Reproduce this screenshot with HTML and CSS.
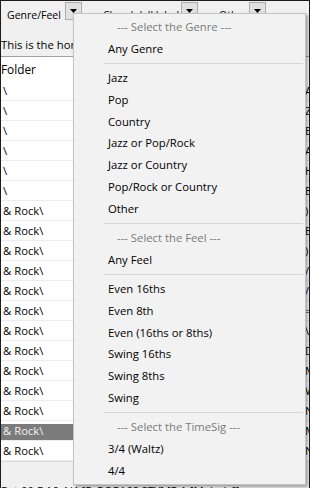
FILE: index.html
```html
<!DOCTYPE html>
<html lang="en">
<head>
  <meta charset="UTF-8" />
  <title>Style Picker</title>
  <link rel="stylesheet" href="styles.css">
</head>
<body>

  <div class="window">
    <div class="toolbar">
      <div class="field field-genre">
        <span class="field-label">Genre/Feel</span>
        <button class="drop"><svg width="7" height="4" viewBox="0 0 7 4"><path d="M0 0h7L3.5 4z" fill="#000"/></svg></button>
      </div>
      <div class="field field-chord">
        <span class="field-label">Chords/all label</span>
        <button class="drop"><svg width="7" height="4" viewBox="0 0 7 4"><path d="M0 0h7L3.5 4z" fill="#000"/></svg></button>
      </div>
      <div class="field field-other">
        <span class="field-label">Other</span>
        <button class="drop"><svg width="7" height="4" viewBox="0 0 7 4"><path d="M0 0h7L3.5 4z" fill="#000"/></svg></button>
      </div>
    </div>

    <div class="hint">This is the home folder of the styles</div>

    <div class="list">
      <div class="list-head">Folder</div>
      <div class="row"><span class="cell">\</span><span class="cell-name">Acoustic</span></div>
      <div class="row"><span class="cell">\</span><span class="cell-name">Zydeco</span></div>
      <div class="row"><span class="cell">\</span><span class="cell-name">Blues</span></div>
      <div class="row"><span class="cell">\</span><span class="cell-name">Ambient</span></div>
      <div class="row"><span class="cell">\</span><span class="cell-name">Hip Hop</span></div>
      <div class="row"><span class="cell">\</span><span class="cell-name">Euro</span></div>
      <div class="row"><span class="cell">&amp; Rock\</span><span class="cell-name">)</span></div>
      <div class="row"><span class="cell">&amp; Rock\</span><span class="cell-name">Boogie</span></div>
      <div class="row"><span class="cell">&amp; Rock\</span><span class="cell-name">)</span></div>
      <div class="row"><span class="cell">&amp; Rock\</span><span class="cell-name">/</span></div>
      <div class="row"><span class="cell">&amp; Rock\</span><span class="cell-name">/</span></div>
      <div class="row"><span class="cell">&amp; Rock\</span><span class="cell-name">=</span></div>
      <div class="row"><span class="cell">&amp; Rock\</span><span class="cell-name">\</span></div>
      <div class="row"><span class="cell">&amp; Rock\</span><span class="cell-name">D</span></div>
      <div class="row"><span class="cell">&amp; Rock\</span><span class="cell-name">M</span></div>
      <div class="row"><span class="cell">&amp; Rock\</span><span class="cell-name">W</span></div>
      <div class="row"><span class="cell">&amp; Rock\</span><span class="cell-name">N</span></div>
      <div class="row selected"><span class="cell">&amp; Rock\</span><span class="cell-name">M</span></div>
      <div class="row"><span class="cell">&amp; Rock\</span><span class="cell-name">N</span></div>
    </div>

    <div class="status">Pat 00 F 16 4/4 [R_POP16S.STY] [P 1 [Melody]]</div>

    <!-- menu opened from the Genre/Feel button -->
    <div class="menu">
      <div class="menu-head">--- Select the Genre ---</div>
      <div class="menu-item">Any Genre</div>
      <div class="menu-sep"></div>
      <div class="menu-item">Jazz</div>
      <div class="menu-item">Pop</div>
      <div class="menu-item">Country</div>
      <div class="menu-item">Jazz or Pop/Rock</div>
      <div class="menu-item">Jazz or Country</div>
      <div class="menu-item">Pop/Rock or Country</div>
      <div class="menu-item">Other</div>
      <div class="menu-sep"></div>
      <div class="menu-head">--- Select the Feel ---</div>
      <div class="menu-item">Any Feel</div>
      <div class="menu-sep"></div>
      <div class="menu-item">Even 16ths</div>
      <div class="menu-item">Even 8th</div>
      <div class="menu-item">Even (16ths or 8ths)</div>
      <div class="menu-item">Swing 16ths</div>
      <div class="menu-item">Swing 8ths</div>
      <div class="menu-item">Swing</div>
      <div class="menu-sep"></div>
      <div class="menu-head">--- Select the TimeSig ---</div>
      <div class="menu-item">3/4 (Waltz)</div>
      <div class="menu-item">4/4</div>
    </div>
  </div>

</body>
</html>
```

FILE: styles.css
```css
body {
  margin: 0;
  padding: 0;
  font-family: 'Open Sans', 'Noto Sans', sans-serif;
  color: #000;
  background-color: #f0f0f0;
  overflow: hidden;
}

.window {
  position: relative;
  width: 310px;
  height: 488px;
  box-sizing: border-box;
  border-top: 1px solid #1c1c1c;
  border-left: 1px solid #1c1c1c;
  border-right: 1px solid #1c1c1c;
  overflow: hidden;
}

.toolbar {
  display: flex;
  height: 24px;
  padding-top: 1px;
}

.field {
  display: flex;
  align-items: flex-start;
}

.field-label {
  font-size: 10.5px;
  line-height: 18px;
  padding-top: 4px;
  white-space: nowrap;
  overflow: hidden;
}

.field-genre .field-label {
  width: 58px;
  padding-left: 6px;
}

.field-chord .field-label {
  width: 78px;
  padding-left: 21px;
}

.field-other .field-label {
  width: 30px;
  padding-left: 21px;
}

.drop {
  width: 17px;
  height: 18px;
  margin: 0;
  padding: 4px 0 0;
  border: 1px solid #adadad;
  background-color: #e1e1e1;
  display: flex;
  justify-content: center;
  align-items: flex-start;
  box-sizing: border-box;
}

.drop svg {
  display: block;
  margin-top: 2px;
}

.hint {
  font-size: 11.3px;
  line-height: 19px;
  padding-top: 9px;
  padding-left: 0;
  height: 21px;
  white-space: nowrap;
}

.list {
  background-color: #fff;
  border-top: 1px solid #a0a0a0;
  border-bottom: 1px solid #d9d9d9;
  font-size: 11.3px;
}

.list-head {
  height: 24px;
  line-height: 24px;
  box-sizing: border-box;
  font-size: 11.8px;
}

.row {
  display: flex;
  height: 20px;
  box-sizing: border-box;
  border-bottom: 1px solid #ececec;
  padding-top: 3px;
  overflow: hidden;
}

.cell {
  flex: 0 0 304px;
  line-height: 14px;
  padding-left: 2px;
  box-sizing: border-box;
  white-space: nowrap;
}

.cell-name {
  line-height: 14px;
  white-space: nowrap;
}

.row.selected .cell {
  background-color: #7b7b7b;
  color: #f2f2f2;
}

.status {
  font-size: 11.3px;
  line-height: 16px;
  padding-top: 21px;
  white-space: nowrap;
}

.menu {
  position: absolute;
  left: 72px;
  top: 12px;
  width: 233px;
  box-sizing: border-box;
  padding: 2px;
  background-color: #f2f2f2;
  border: 1px solid #c4c4c4;
  box-shadow: 2px 2px 3px rgba(0,0,0,0.35);
  font-size: 11.3px;
}

.menu-item,
.menu-head {
  height: 21.9px;
  line-height: 21.9px;
  padding-left: 32px;
  white-space: nowrap;
}

.menu-head {
  padding-left: 41px;
  color: #7a7a7a;
}

.menu-sep {
  height: 7px;
  margin-left: 28px;
  position: relative;
}

.menu-sep::before {
  content: '';
  position: absolute;
  left: 0;
  right: 0;
  top: 3px;
  border-top: 1px solid #d7d7d7;
}
```
